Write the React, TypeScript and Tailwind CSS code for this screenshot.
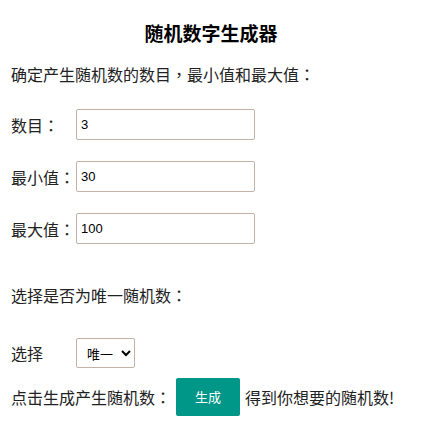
import { useState } from 'react';

export default function App() {
  const [count, setCount] = useState('3');
  const [min, setMin] = useState('30');
  const [max, setMax] = useState('100');
  const [mode, setMode] = useState('unique');

  const inputCls =
    'w-[179px] h-[31px] border border-[#c2b2a6] rounded-[2px] px-[4px] text-[13px] text-black outline-none bg-white';
  const inputFont = { fontFamily: '"Liberation Sans", Arial, sans-serif' };

  return (
    <div
      className="min-h-[426px] bg-white text-[16px] text-[#222]"
      style={{ fontFamily: '"Noto Sans CJK TC", "Noto Sans CJK SC", sans-serif' }}
    >
      <h3 className="pt-[19px] text-center text-[19px] leading-[28px] font-bold text-black">
        随机数字生成器
      </h3>

      <div className="pl-[11px]">
        <p className="mt-[15px] leading-[24px]">确定产生随机数的数目，最小值和最大值：</p>

        {/* number inputs */}
        <div className="mt-[23px] flex flex-col gap-[21px]">
          <div className="flex items-center">
            <span className="w-[65px] leading-[24px]">数目：</span>
            <input className={inputCls} style={inputFont} value={count} onChange={(e) => setCount(e.target.value)} />
          </div>
          <div className="flex items-center">
            <span className="w-[65px] leading-[24px]">最小值：</span>
            <input className={inputCls} style={inputFont} value={min} onChange={(e) => setMin(e.target.value)} />
          </div>
          <div className="flex items-center">
            <span className="w-[65px] leading-[24px]">最大值：</span>
            <input className={inputCls} style={inputFont} value={max} onChange={(e) => setMax(e.target.value)} />
          </div>
        </div>

        <p className="mt-[39px] leading-[24px]">选择是否为唯一随机数：</p>

        <div className="mt-[31px] flex items-center">
          <span className="w-[65px] leading-[24px]">选择</span>
          <select
            className="w-[59px] h-[30px] border border-[#c2b2a6] rounded-[2px] pl-[6px] text-[13px] text-black bg-white"
            value={mode}
            onChange={(e) => setMode(e.target.value)}
          >
            <option value="unique">唯一</option>
            <option value="repeat">重复</option>
          </select>
        </div>

        <div className="mt-[10px] flex items-center">
          <span className="leading-[24px]">点击生成产生随机数：</span>
          <button className="ml-[5px] w-[64px] h-[38px] rounded-[2px] bg-[#009688] text-white text-[13px]">
            生成
          </button>
          <span className="ml-[5px] leading-[24px]">得到你想要的随机数!</span>
        </div>
      </div>
    </div>
  );
}
